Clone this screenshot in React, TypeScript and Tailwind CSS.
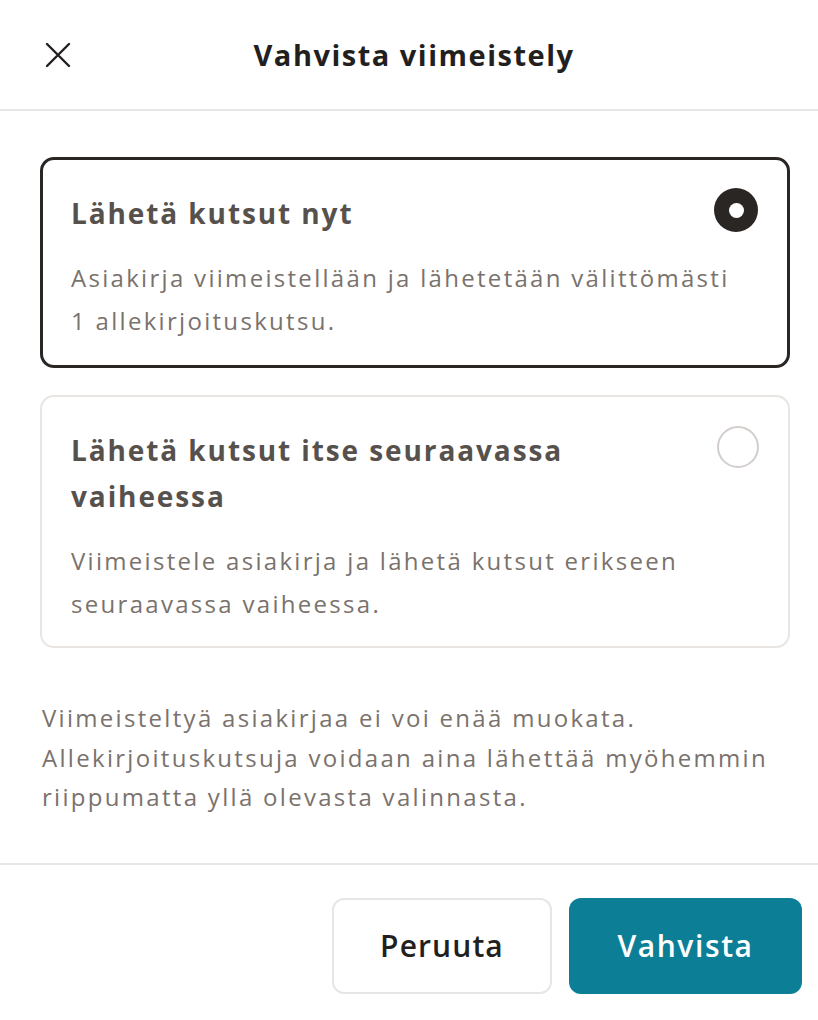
import React, { useState } from "react";

const options = [
  {
    id: "now",
    title: "Lähetä kutsut nyt",
    text: "Asiakirja viimeistellään ja lähetetään välittömästi 1 allekirjoituskutsu.",
  },
  {
    id: "later",
    title: "Lähetä kutsut itse seuraavassa vaiheessa",
    text: "Viimeistele asiakirja ja lähetä kutsut erikseen seuraavassa vaiheessa.",
  },
];

export default function App() {
  const [selected, setSelected] = useState("now");

  return (
    <div
      className="w-[818px] h-[1020px] bg-white flex flex-col text-[#231f1e]"
      style={{ fontFamily: '"Open Sans", "Noto Sans", sans-serif' }}
    >
      {/* Header */}
      <div className="h-[111px] border-b-2 border-[#e6e6e6] flex items-center px-[44px]">
        <button className="w-[28px] h-[28px] flex items-center justify-center">
          <svg width="26" height="26" viewBox="0 0 26 26" fill="none" stroke="#231f1e" strokeWidth="2.4" strokeLinecap="round">
            <path d="M2 2 L24 24 M24 2 L2 24" />
          </svg>
        </button>
        <h1 className="flex-1 text-center text-[29px] font-bold tracking-[1.5px] pr-[18px]">Vahvista viimeistely</h1>
      </div>

      {/* Options */}
      <div className="pl-[40px] pr-[28px] pt-[46px] flex flex-col gap-[27px]">
        {options.map((o) => {
          const active = selected === o.id;
          return (
            <div
              key={o.id}
              onClick={() => setSelected(o.id)}
              className={
                active
                  ? "rounded-[14px] border-[3px] border-[#2a2624] pl-[28px] pr-[29px] pt-[30px] pb-[23px] cursor-pointer"
                  : "rounded-[14px] border-2 border-[#e8e5e3] pl-[29px] pr-[29px] pt-[30px] pb-[21px] cursor-pointer"
              }
            >
              <div className="flex gap-[20px]">
                <div className="flex-1 text-[28px] leading-[46px] font-bold tracking-[1.9px] text-[#57514d]">{o.title}</div>
                {active ? (
                  <div className="w-[44px] h-[44px] rounded-full bg-[#2a2624] flex items-center justify-center shrink-0 -mt-[2px]">
                    <div className="w-[15px] h-[15px] rounded-full bg-white" />
                  </div>
                ) : (
                  <div className="w-[42px] h-[42px] rounded-full border-2 border-[#d3cecb] shrink-0 -mt-[1px]" />
                )}
              </div>
              <div className="mt-[20px] pr-[14px] text-[24px] leading-[43px] tracking-[2.3px] text-[#7a726c]">{o.text}</div>
            </div>
          );
        })}
      </div>

      <p className="pl-[42px] pr-[28px] mt-[50px] text-[24px] leading-[39.5px] tracking-[2.3px] text-[#7a726c]">
        Viimeisteltyä asiakirjaa ei voi enää muokata. Allekirjoituskutsuja voidaan aina lähettää myöhemmin riippumatta yllä olevasta valinnasta.
      </p>

      <div className="mt-[46px] border-t-2 border-[#e6e6e6] flex justify-end gap-[17px] pt-[33px] pr-[16px]">
        <button className="w-[220px] h-[96px] rounded-[12px] border-2 border-[#e6e6e6] text-[30px] font-semibold tracking-[1.1px] text-[#231f1e]">
          Peruuta
        </button>
        <button className="w-[233px] h-[96px] rounded-[12px] bg-[#0c7f97] text-[30px] font-semibold tracking-[1.6px] text-white">
          Vahvista
        </button>
      </div>
    </div>
  );
}
